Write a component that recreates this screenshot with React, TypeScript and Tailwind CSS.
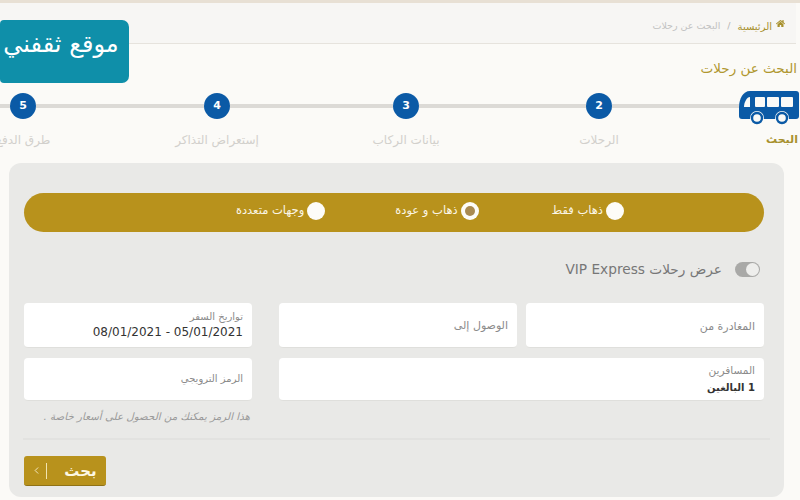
import { ChevronLeft } from "lucide-react";
import { FaHome } from "react-icons/fa";

const font = "font-['DejaVu_Sans','Noto_Sans',sans-serif]";

function BusIcon() {
    return (
        <svg width="60" height="38" viewBox="0 0 60 38" className="shrink-0">
            <path
                d="M11 4H57a3 3 0 0 1 3 3V29a3 3 0 0 1-3 3H3a3 3 0 0 1-3-3V20C0 12 4 4 11 4Z"
                fill="#0b5aa6"
            />
            <path d="M5 20C5 15 8 10 11 10V20Z" fill="#fbfaf7" />
            <rect x="16" y="10" width="10" height="10" rx="1" fill="#fbfaf7" />
            <rect x="28" y="10" width="12" height="10" rx="1" fill="#fbfaf7" />
            <rect x="42" y="10" width="12" height="10" rx="1" fill="#fbfaf7" />
            <circle cx="18" cy="31" r="7" fill="#fbfaf7" />
            <circle cx="18" cy="31" r="5" fill="none" stroke="#0b5aa6" strokeWidth="2.4" />
            <circle cx="43" cy="31" r="7" fill="#fbfaf7" />
            <circle cx="43" cy="31" r="5" fill="none" stroke="#0b5aa6" strokeWidth="2.4" />
        </svg>
    );
}

function StepDot({ n }: { n: number }) {
    return (
        <div className="w-[26px] h-[26px] shrink-0 rounded-full bg-[#0b5aa6] text-white text-[11px] font-bold flex items-center justify-center">
            {n}
        </div>
    );
}

function StepLine({ className }: { className: string }) {
    return <div className={`h-[4px] bg-[#dcdad6] ${className}`} />;
}

function StepLabel({ text }: { text: string }) {
    return (
        <div className="w-[26px] flex justify-center whitespace-nowrap text-[12px] text-[#d2d0cc]">
            {text}
        </div>
    );
}

function Radio({ label, checked, className = "" }: { label: string; checked?: boolean; className?: string }) {
    return (
        <div className={`flex items-center gap-[3px] ${className}`}>
            <div className="w-[18px] h-[18px] rounded-full bg-[#fdfcf8] flex items-center justify-center">
                {checked && <div className="w-[10px] h-[10px] rounded-full bg-[#a98a50]" />}
            </div>
            <span className="text-[11.5px] text-[#fbf6e6]">{label}</span>
        </div>
    );
}

function Field({
    label,
    value,
    className = "",
    labelClass = "text-[11px]",
    valueClass = "",
}: {
    label: string;
    value?: string;
    className?: string;
    labelClass?: string;
    valueClass?: string;
}) {
    return (
        <div className={`bg-white rounded-[4px] border-b border-[#dfdfdc] px-[9px] flex flex-col justify-center ${className}`}>
            <div className={`text-[#8b8b8b] leading-[14px] ${labelClass}`}>{label}</div>
            {value && <div className={`text-[#333333] leading-[18px] ${valueClass}`}>{value}</div>}
        </div>
    );
}

export default function App() {
    return (
        <div dir="rtl" className={`relative w-[800px] h-[500px] overflow-hidden bg-[#fbfaf7] ${font}`}>
            <div className="h-[3px] bg-[#e8e0d4]" />

            {/* breadcrumb */}
            <div className="h-[41px] mr-[4px] border-b border-[#e6e3dd] bg-[#f7f6f4] flex items-center gap-[4px] pr-[11px] pt-[7px] text-[9.5px]">
                <FaHome className="text-[#a8912e] w-[9px] h-[9px] mb-[6px]" />
                <span className="text-[#a8912e] text-[10px]">الرئيسية</span>
                <span className="text-[#b5b5b5] mx-[3px]">/</span>
                <span className="text-[#c2c2c2]">البحث عن رحلات</span>
            </div>

            <h1 className="text-[13.5px] leading-[20px] text-[#b0972f] mt-[14px] pr-[3px]">البحث عن رحلات</h1>

            {/* stepper */}
            <div dir="ltr" className="flex items-center h-[36px] mt-[10px]">
                <StepLine className="w-[10px]" />
                <StepDot n={5} />
                <StepLine className="w-[168px]" />
                <StepDot n={4} />
                <StepLine className="w-[163px]" />
                <StepDot n={3} />
                <StepLine className="w-[167px]" />
                <StepDot n={2} />
                <StepLine className="w-[127px]" />
                <BusIcon />
            </div>
            <div dir="ltr" className="flex items-center mt-[8px] h-[16px] pl-[10px] pr-[2px]">
                <StepLabel text="طرق الدفع" />
                <div className="w-[168px]" />
                <StepLabel text="إستعراض التذاكر" />
                <div className="w-[163px]" />
                <StepLabel text="بيانات الركاب" />
                <div className="w-[167px]" />
                <StepLabel text="الرحلات" />
                <div className="flex-1 text-right text-[11px] font-bold text-[#a8912e]">البحث</div>
            </div>

            {/* search panel */}
            <div className="ml-[9px] mr-[16px] mt-[15px] h-[334px] bg-[#e9e9e7] rounded-[12px] pt-[30px] px-[20px]">
                <div className="ml-[-5px] h-[39px] rounded-full bg-[#b8921c] flex items-center pr-[140px] pb-[4px] gap-[73px]">
                    <Radio label="ذهاب فقط" />
                    <Radio label="ذهاب و عودة" checked />
                    <Radio label="وجهات متعددة" className="-mr-[3px]" />
                </div>

                <div className="flex items-center gap-[13px] mt-[26px] h-[22px] pr-[4px] text-[13.7px] text-[#777777]">
                    <div className="w-[25px] h-[15px] rounded-full bg-[#a9a9a7] flex items-center justify-start px-[1px]">
                        <div className="w-[13px] h-[13px] rounded-full bg-[#eeeeec]" />
                    </div>
                    <span>عرض رحلات VIP Express</span>
                </div>

                {/* fields */}
                <div className="flex gap-[27px] ml-[-5px] mt-[23px]">
                    <div className="flex-1 flex flex-col gap-[10px]">
                        <div className="flex gap-[9px]">
                            <Field label="المغادرة من" className="flex-1 h-[45px] pt-[3px]" />
                            <Field label="الوصول إلى" className="flex-1 h-[45px] pt-[2px]" />
                        </div>
                        <Field
                            label="المسافرين"
                            labelClass="text-[10.5px]"
                            value="1 البالغين"
                            valueClass="text-[10px] font-bold mt-[2px]"
                            className="h-[43px] pt-[1px]"
                        />
                    </div>
                    <div className="w-[228px] flex flex-col gap-[10px]">
                        <Field
                            label="تواريخ السفر"
                            labelClass="text-[10px]"
                            value="08/01/2021 - 05/01/2021"
                            valueClass="text-[12px] -mt-[1px] [direction:ltr] text-right"
                            className="h-[45px]"
                        />
                        <Field label="الرمز الترويجي" labelClass="text-[10px]" className="h-[43px]" />
                        <div className="text-[10.3px] italic text-[#9a9a9a] pr-[2px] -mt-[2px] whitespace-nowrap">
                            هذا الرمز يمكنك من الحصول على أسعار خاصة .
                        </div>
                    </div>
                </div>

                <div className="h-[2px] bg-[#e2e2e0] -mx-[6px] mt-[14px]" />

                <button className="mt-[16px] mr-[658px] w-[82px] h-[30px] rounded-[3px] bg-[#b8921c] border-b border-[#8f7216] flex items-center text-[#fdf8e4] text-[15px] font-bold">
                    <span className="flex-1 text-center pl-[8px]">بحث</span>
                    <span className="h-[16px] w-px bg-[#f1e3b0]" />
                    <ChevronLeft className="w-[11px] h-[11px] mr-[4px] ml-[7px] text-[#f6eecb]" />
                </button>
            </div>

            {/* site badge sits over the page */}
            <div className="absolute left-0 top-[20px] w-[129px] h-[63px] rounded-r-[7px] rounded-l-[4px] bg-[#0f8fa9] flex items-center justify-center pb-[15px] pr-[7px] text-white text-[24px]">
                موقع ثقفني
            </div>
        </div>
    );
}
